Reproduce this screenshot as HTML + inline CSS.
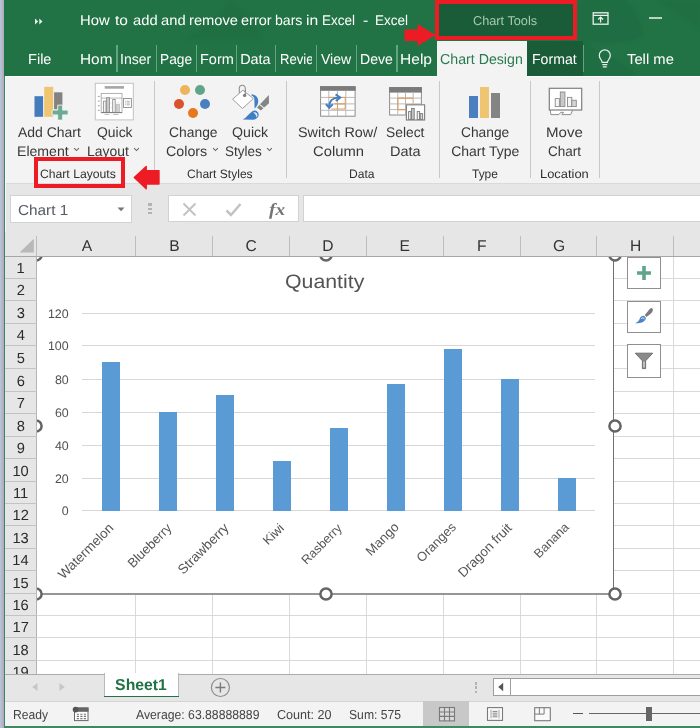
<!DOCTYPE html>
<html lang="en">
<head>
<meta charset="utf-8">
<title>How to add and remove error bars in Excel - Excel</title>
<style>
html,body{margin:0;padding:0;background:#fff;}
body{width:700px;height:728px;overflow:hidden;}
#app{position:relative;width:700px;height:728px;overflow:hidden;font-family:"Liberation Sans",sans-serif;will-change:transform;}
.t{position:absolute;white-space:nowrap;display:block;transform-origin:0 0;text-rendering:geometricPrecision;}
</style>
</head>
<body>
<div id="app">
<div style="position:absolute;left:0.00px;top:0.00px;width:700.00px;height:728.00px;background:#ffffff;"></div>
<div style="position:absolute;left:0.00px;top:0.00px;width:700.00px;height:76.30px;background:#217346;"></div>
<div style="position:absolute;left:0.00px;top:76.30px;width:700.00px;height:106.40px;background:#f3f3f3;"></div>
<div style="position:absolute;left:0.00px;top:182.70px;width:700.00px;height:74.00px;background:#e6e6e6;"></div>
<div style="position:absolute;left:0.00px;top:182.70px;width:700.00px;height:1.00px;background:#dadada;"></div>
<svg style="position:absolute;left:0;top:0;filter:blur(2.2px)" width="700" height="76" viewBox="0 0 700 76"><path d="M578 0 H626 C636 10 643 24 643 35 C636 41 622 43 606 43 H584 C600 52 620 60 640 76 H560 V40 H578 Z" fill="#000" fill-opacity="0.05"/><path d="M655 0 H700 V30 C690 22 672 12 655 0 Z" fill="#000" fill-opacity="0.03"/><path d="M230 0 C250 14 262 26 262 40 H180 C200 30 220 16 230 0 Z" fill="#000" fill-opacity="0.03"/></svg>
<svg style="position:absolute;left:34px;top:17px" width="10" height="9" viewBox="0 0 10 9"><path d="M1 1.5 L4.2 4.5 L1 7.5 Z M5.3 1.5 L8.5 4.5 L5.3 7.5 Z" fill="#e8f1ec"/></svg>
<span class="t" id="t1" style="left:80.29px;top:13.00px;font-size:14.1px;line-height:14.1px;color:#ffffff;transform:scaleX(1.0519);">How</span>
<span class="t" id="t2" style="left:115.33px;top:13.00px;font-size:14.1px;line-height:14.1px;color:#ffffff;transform:scaleX(1.1000);">to</span>
<span class="t" id="t3" style="left:132.58px;top:13.00px;font-size:14.1px;line-height:14.1px;color:#ffffff;transform:scaleX(1.0455);">add</span>
<span class="t" id="t4" style="left:160.98px;top:13.00px;font-size:14.1px;line-height:14.1px;color:#ffffff;transform:scaleX(1.0455);">and</span>
<span class="t" id="t5" style="left:189.06px;top:13.00px;font-size:14.1px;line-height:14.1px;color:#ffffff;transform:scaleX(1.0418);">remove</span>
<span class="t" id="t6" style="left:240.78px;top:13.00px;font-size:14.1px;line-height:14.1px;color:#ffffff;transform:scaleX(1.0310);">error</span>
<span class="t" id="t7" style="left:275.00px;top:13.00px;font-size:14.1px;line-height:14.1px;color:#ffffff;">bars</span>
<span class="t" id="t8" style="left:306.09px;top:13.00px;font-size:14.1px;line-height:14.1px;color:#ffffff;transform:scaleX(1.1111);">in</span>
<span class="t" id="t9" style="left:321.70px;top:13.00px;font-size:14.1px;line-height:14.1px;color:#ffffff;transform:scaleX(0.9581);">Excel</span>
<span class="t" id="t10" style="left:363.39px;top:13.00px;font-size:14.1px;line-height:14.1px;color:#ffffff;transform:scaleX(1.1400);">-</span>
<span class="t" id="t11" style="left:374.90px;top:13.00px;font-size:14.1px;line-height:14.1px;color:#ffffff;transform:scaleX(0.9581);">Excel</span>
<div style="position:absolute;left:434.90px;top:-0.50px;width:141.90px;height:40.40px;background:#1a5c38;box-sizing:border-box;border:4.6px solid #ed1c24;"></div>
<span class="t" id="t12" style="left:472.95px;top:15.00px;font-size:12.8px;line-height:12.8px;color:#a7c8b5;transform:scaleX(0.9945);">Chart Tools</span>
<svg style="position:absolute;left:403px;top:22px" width="34" height="26" viewBox="0 0 34 26"><path d="M1.5 7.5 L14.5 7.5 L14.5 2 L32.5 13 L14.5 24 L14.5 19 L1.5 19 Z" fill="#ed1c24"/></svg>
<svg style="position:absolute;left:591.6px;top:11.4px" width="18" height="15" viewBox="0 0 18 15"><rect x="1.2" y="1.8" width="14.8" height="11.4" fill="none" stroke="#e8f1ec" stroke-width="1.3"/><path d="M1.2 4.4 H16" stroke="#e8f1ec" stroke-width="1.2"/><path d="M8.6 6.2 L8.6 11.6 M6.1 8.5 L8.6 6.1 L11.1 8.5" fill="none" stroke="#e8f1ec" stroke-width="1.3"/></svg>
<div style="position:absolute;left:649.00px;top:17.00px;width:13.00px;height:2.00px;background:#b9d3c5;"></div>
<span class="t" id="t13" style="left:28.24px;top:53.00px;font-size:14.4px;line-height:14.4px;color:#ffffff;transform:scaleX(1.0118);">File</span>
<span class="t" id="t14" style="left:79.86px;top:53.00px;font-size:14.4px;line-height:14.4px;color:#ffffff;transform:scaleX(1.0690);">Hom</span>
<span class="t" id="t15" style="left:120.48px;top:53.00px;font-size:14.4px;line-height:14.4px;color:#ffffff;transform:scaleX(0.9738);">Inser</span>
<span class="t" id="t16" style="left:159.80px;top:53.00px;font-size:14.4px;line-height:14.4px;color:#ffffff;transform:scaleX(0.9575);">Page</span>
<span class="t" id="t17" style="left:200.14px;top:53.00px;font-size:14.4px;line-height:14.4px;color:#ffffff;transform:scaleX(1.0080);">Form</span>
<span class="t" id="t18" style="left:240.15px;top:53.00px;font-size:14.4px;line-height:14.4px;color:#ffffff;">Data</span>
<span class="t" id="t19" style="left:279.76px;top:53.00px;font-size:14.4px;line-height:14.4px;color:#ffffff;transform:scaleX(0.9114);">Revie</span>
<span class="t" id="t20" style="left:321.16px;top:53.00px;font-size:14.4px;line-height:14.4px;color:#ffffff;transform:scaleX(0.9756);">View</span>
<span class="t" id="t21" style="left:359.68px;top:53.00px;font-size:14.4px;line-height:14.4px;color:#ffffff;transform:scaleX(0.9795);">Deve</span>
<span class="t" id="t22" style="left:399.55px;top:53.00px;font-size:14.4px;line-height:14.4px;color:#ffffff;transform:scaleX(1.0811);">Help</span>
<div style="position:absolute;left:311.60px;top:46.00px;width:4.20px;height:26.00px;background:#217346;"></div>
<div style="position:absolute;left:116.40px;top:45.20px;width:1.20px;height:26.60px;background:#63a583;"></div>
<div style="position:absolute;left:156.00px;top:45.20px;width:1.20px;height:26.60px;background:#63a583;"></div>
<div style="position:absolute;left:196.00px;top:45.20px;width:1.20px;height:26.60px;background:#63a583;"></div>
<div style="position:absolute;left:236.00px;top:45.20px;width:1.20px;height:26.60px;background:#63a583;"></div>
<div style="position:absolute;left:275.30px;top:45.20px;width:1.20px;height:26.60px;background:#63a583;"></div>
<div style="position:absolute;left:316.00px;top:45.20px;width:1.20px;height:26.60px;background:#63a583;"></div>
<div style="position:absolute;left:355.80px;top:45.20px;width:1.20px;height:26.60px;background:#63a583;"></div>
<div style="position:absolute;left:396.40px;top:45.20px;width:1.20px;height:26.60px;background:#63a583;"></div>
<div style="position:absolute;left:582.80px;top:45.20px;width:1.20px;height:26.60px;background:#63a583;"></div>
<div style="position:absolute;left:436.60px;top:40.60px;width:90.60px;height:36.00px;background:#f3f3f3;"></div>
<span class="t" id="t23" style="left:440.46px;top:53.00px;font-size:14.4px;line-height:14.4px;color:#2a7a50;transform:scaleX(0.9860);">Chart Design</span>
<div style="position:absolute;left:527.20px;top:41.00px;width:55.80px;height:35.30px;background:#1a5c38;"></div>
<span class="t" id="t24" style="left:532.37px;top:53.00px;font-size:14.4px;line-height:14.4px;color:#ffffff;transform:scaleX(0.9808);">Format</span>
<svg style="position:absolute;left:595.6px;top:47.8px" width="17.6" height="21.8" viewBox="0 0 18 23"><path d="M6.2 15.2 C6.2 12.6 3.2 11.4 3.2 7.8 A5.8 5.8 0 0 1 14.8 7.8 C14.8 11.4 11.8 12.6 11.8 15.2 Z" fill="none" stroke="#e8f1ec" stroke-width="1.3"/><path d="M6.4 17.6 H11.6 M6.9 20 H11.1" stroke="#e8f1ec" stroke-width="1.3"/></svg>
<span class="t" id="t25" style="left:627.24px;top:53.00px;font-size:14.4px;line-height:14.4px;color:#ffffff;transform:scaleX(1.0279);">Tell me</span>
<div style="position:absolute;left:154.40px;top:81.00px;width:1.00px;height:96.50px;background:#c9c9c9;"></div>
<div style="position:absolute;left:286.30px;top:81.00px;width:1.00px;height:96.50px;background:#c9c9c9;"></div>
<div style="position:absolute;left:438.50px;top:81.00px;width:1.00px;height:96.50px;background:#c9c9c9;"></div>
<div style="position:absolute;left:529.80px;top:81.00px;width:1.00px;height:96.50px;background:#c9c9c9;"></div>
<div style="position:absolute;left:599.20px;top:81.00px;width:1.00px;height:96.50px;background:#c9c9c9;"></div>
<span class="t" id="t26" style="left:18.30px;top:125.00px;font-size:14.0px;line-height:14.0px;color:#383838;transform:scaleX(0.9968);">Add Chart</span>
<span class="t" id="t27" style="left:16.54px;top:144.00px;font-size:14.0px;line-height:14.0px;color:#383838;transform:scaleX(1.0060);">Element</span>
<span class="t" id="t28" style="left:97.05px;top:125.00px;font-size:14.0px;line-height:14.0px;color:#383838;transform:scaleX(0.9943);">Quick</span>
<span class="t" id="t29" style="left:86.76px;top:144.00px;font-size:14.0px;line-height:14.0px;color:#383838;transform:scaleX(0.9939);">Layout</span>
<span class="t" id="t30" style="left:168.56px;top:125.00px;font-size:14.0px;line-height:14.0px;color:#383838;transform:scaleX(0.9906);">Change</span>
<span class="t" id="t31" style="left:165.54px;top:144.00px;font-size:14.0px;line-height:14.0px;color:#383838;transform:scaleX(1.0191);">Colors</span>
<span class="t" id="t32" style="left:231.84px;top:125.00px;font-size:14.0px;line-height:14.0px;color:#383838;transform:scaleX(1.0114);">Quick</span>
<span class="t" id="t33" style="left:224.98px;top:144.00px;font-size:14.0px;line-height:14.0px;color:#383838;transform:scaleX(0.9633);">Styles</span>
<span class="t" id="t34" style="left:297.93px;top:125.00px;font-size:14.0px;line-height:14.0px;color:#383838;transform:scaleX(1.0282);">Switch Row/</span>
<span class="t" id="t35" style="left:312.81px;top:144.00px;font-size:14.0px;line-height:14.0px;color:#383838;transform:scaleX(1.0559);">Column</span>
<span class="t" id="t36" style="left:386.26px;top:125.00px;font-size:14.0px;line-height:14.0px;color:#383838;transform:scaleX(0.9868);">Select</span>
<span class="t" id="t37" style="left:389.61px;top:144.00px;font-size:14.0px;line-height:14.0px;color:#383838;transform:scaleX(1.0336);">Data</span>
<span class="t" id="t38" style="left:460.66px;top:125.00px;font-size:14.0px;line-height:14.0px;color:#383838;transform:scaleX(0.9843);">Change</span>
<span class="t" id="t39" style="left:451.15px;top:144.00px;font-size:14.0px;line-height:14.0px;color:#383838;">Chart Type</span>
<span class="t" id="t40" style="left:546.46px;top:125.00px;font-size:14.0px;line-height:14.0px;color:#383838;transform:scaleX(1.0760);">Move</span>
<span class="t" id="t41" style="left:548.07px;top:144.00px;font-size:14.0px;line-height:14.0px;color:#383838;transform:scaleX(0.9672);">Chart</span>
<svg style="position:absolute;left:72.7px;top:147.3px" width="7" height="5" viewBox="0 0 7 5"><path d="M1.1 1.2 L3.5 3.6 L5.9 1.2" fill="none" stroke="#666" stroke-width="1.05"/></svg>
<svg style="position:absolute;left:133.4px;top:147.3px" width="7" height="5" viewBox="0 0 7 5"><path d="M1.1 1.2 L3.5 3.6 L5.9 1.2" fill="none" stroke="#666" stroke-width="1.05"/></svg>
<svg style="position:absolute;left:211.7px;top:147.3px" width="7" height="5" viewBox="0 0 7 5"><path d="M1.1 1.2 L3.5 3.6 L5.9 1.2" fill="none" stroke="#666" stroke-width="1.05"/></svg>
<svg style="position:absolute;left:266.3px;top:147.3px" width="7" height="5" viewBox="0 0 7 5"><path d="M1.1 1.2 L3.5 3.6 L5.9 1.2" fill="none" stroke="#666" stroke-width="1.05"/></svg>
<span class="t" id="t42" style="left:39.95px;top:168.00px;font-size:12.2px;line-height:12.2px;color:#303030;">Chart Layouts</span>
<span class="t" id="t43" style="left:187.26px;top:168.00px;font-size:12.2px;line-height:12.2px;color:#303030;transform:scaleX(0.9885);">Chart Styles</span>
<span class="t" id="t44" style="left:349.41px;top:168.00px;font-size:12.2px;line-height:12.2px;color:#303030;transform:scaleX(0.9899);">Data</span>
<span class="t" id="t45" style="left:472.15px;top:168.00px;font-size:12.2px;line-height:12.2px;color:#303030;transform:scaleX(0.9804);">Type</span>
<span class="t" id="t46" style="left:539.54px;top:168.00px;font-size:12.2px;line-height:12.2px;color:#303030;transform:scaleX(1.0576);">Location</span>
<div style="position:absolute;left:33.70px;top:156.90px;width:91.10px;height:31.50px;background:transparent;box-sizing:border-box;border:4.6px solid #ed1c24;"></div>
<svg style="position:absolute;left:132px;top:163px" width="30" height="28" viewBox="0 0 30 28"><path d="M27 7.6 L14.2 7.6 L14.2 3.4 L2.3 14.6 L14.2 25.8 L14.2 21 L27 21 Z" fill="#ed1c24" stroke="#ed1c24" stroke-width="1.4" stroke-linejoin="round"/></svg>
<svg style="position:absolute;left:33px;top:85px" width="37" height="36" viewBox="0 0 37 36"><rect x="1.5" y="11.2" width="8.6" height="20.6" fill="#437bbb"/><rect x="11.2" y="1.8" width="9" height="30" fill="#f0c571"/><rect x="21.1" y="7.3" width="8.3" height="17" fill="#828282"/><path d="M24.7 20.1 h4.9 v5 h5.5 v4.8 h-5.5 v5.2 h-4.9 v-5.2 h-5.6 v-4.8 h5.6 z" fill="#6aab94" stroke="#f3f3f3" stroke-width="0.9"/></svg>
<svg style="position:absolute;left:94px;top:82px" width="41" height="39" viewBox="0 0 41 39"><rect x="1.3" y="1.3" width="38" height="36.6" fill="#fff" stroke="#c2c2c2" stroke-width="1"/><rect x="10.7" y="4.1" width="19.3" height="2.6" fill="#a6a6a6"/><rect x="7.2" y="11.4" width="20.8" height="19.2" fill="#fff" stroke="#a9a9a9" stroke-width="0.9"/><path d="M7.2 16.1h20.8" stroke="#a9a9a9" stroke-width="0.8"/><path d="M7.6 21h20M7.6 25.6h20" stroke="#dedede" stroke-width="0.6"/><path d="M3.9 14.4h1.8M3.9 19.1h1.8M3.9 23.8h1.8M3.9 28.4h1.8" stroke="#8f8f8f" stroke-width="0.9"/><rect x="9.6" y="19.1" width="2.4" height="11.2" fill="#f4f4f4" stroke="#8a8a8a" stroke-width="0.8"/><rect x="12.6" y="15.7" width="3" height="14.6" fill="#c9c9c9" stroke="#8a8a8a" stroke-width="0.8"/><rect x="18.7" y="17.5" width="2.5" height="12.8" fill="#f4f4f4" stroke="#8a8a8a" stroke-width="0.8"/><rect x="22" y="22.6" width="3.5" height="7.7" fill="#cfcfcf" stroke="#b0b0b0" stroke-width="0.6"/><path d="M7.2 30.6h20.8" stroke="#7d7d7d" stroke-width="1"/><rect x="29.5" y="16.5" width="7.9" height="9" fill="#fff" stroke="#8d8d8d" stroke-width="0.9"/><path d="M31 19.2h0.8M32.6 19.2h3.2M31 21h0.8M32.6 21h3.2M31 22.8h0.8M32.6 22.8h3.2" stroke="#999" stroke-width="0.8"/><path d="M10.5 32.5h4.7M19.1 32.5h5.5" stroke="#b0b0b0" stroke-width="0.8"/></svg>
<div style="position:absolute;left:180.30px;top:85.20px;width:10.00px;height:10.00px;background:#ecb55c;border-radius:50%;"></div>
<div style="position:absolute;left:194.90px;top:85.20px;width:10.00px;height:10.00px;background:#5fa58a;border-radius:50%;"></div>
<div style="position:absolute;left:174.30px;top:98.60px;width:10.00px;height:10.00px;background:#d9532c;border-radius:50%;"></div>
<div style="position:absolute;left:200.20px;top:98.60px;width:10.00px;height:10.00px;background:#4a7fc0;border-radius:50%;"></div>
<div style="position:absolute;left:187.60px;top:107.80px;width:10.00px;height:10.00px;background:#e8781d;border-radius:50%;"></div>
<svg style="position:absolute;left:231px;top:84px" width="40" height="37" viewBox="0 0 40 37"><path d="M20.8 10.2 C25.2 10.8 27.6 14 27.2 18 C26.9 21 25.4 23 23.6 24.4 L23.3 14.8 C23 13.2 22 12.2 20.4 11.6 Z" fill="#3f7fc4"/><path d="M8.3 9 V4.3 a3 3 0 0 1 6 0 V11" fill="none" stroke="#8f8f8f" stroke-width="1.1"/><path d="M1.6 15.2 L11.9 6.2 L22.3 14.6 L11.5 24.5 Z" fill="#ffffff" stroke="#9c9c9c" stroke-width="1" stroke-linejoin="round"/><path d="M14.3 6 V11" fill="none" stroke="#8f8f8f" stroke-width="1.1"/><circle cx="13.6" cy="11.4" r="1.7" fill="#7f7f7f"/><path d="M37.8 11 L38 19.2 L29.8 26.6 L26 23.6 Z" fill="#858585"/><path d="M28.7 20.6 L33.6 24.4" stroke="#f3f3f3" stroke-width="1.1"/><path d="M11.7 35.6 C16 33.2 18 29.4 21.4 27.2 C24 25.6 27 27 27.6 30 C28.2 33 25.4 35.6 22 35.7 Z" fill="#3f7fc4"/><path d="M22.3 28.6 C24.4 27.8 26.2 29 26.4 31 C26.5 32 26.2 32.8 25.6 33.4 C25.2 31.4 24 29.6 22.3 28.6 Z" fill="#e6f1fb"/></svg>
<svg style="position:absolute;left:319px;top:85px" width="38" height="33" viewBox="0 0 38 33"><rect x="1.6" y="1.7" width="34.5" height="29.5" fill="#fff" stroke="#8c8c8c" stroke-width="1"/><rect x="1.1" y="1.2" width="35.5" height="4.6" fill="#7b7b7b"/><path d="M1.6 12.4h34.5M1.6 18.9h34.5M1.6 25.3h34.5M9.8 5.8v25.4M18.5 5.8v25.4M26.8 5.8v25.4" stroke="#b9b9b9" stroke-width="1"/><path d="M9.8 12.4h16.4v11.6h-14" fill="none" stroke="#dc9c62" stroke-width="1"/><path d="M18.5 18.4v5.6M15.3 18.9h10.9" fill="none" stroke="#dc9c62" stroke-width="1.1"/><path d="M10.2 21.4 C10.2 16 14 12.6 20 12.5" fill="none" stroke="#437fc0" stroke-width="2"/><path d="M16.6 9.4 L21.2 12.5 L16.9 16.1" fill="none" stroke="#437fc0" stroke-width="2"/><path d="M7 19 L10.2 22.8 L13.8 19.3" fill="none" stroke="#437fc0" stroke-width="2"/></svg>
<svg style="position:absolute;left:388px;top:86px" width="38" height="36" viewBox="0 0 38 36"><rect x="1.6" y="1.6" width="31.8" height="27.4" fill="#fff" stroke="#8c8c8c" stroke-width="1"/><rect x="1.1" y="1.1" width="32.8" height="5.5" fill="#7b7b7b"/><path d="M1.6 12.1h31.8M1.6 17.9h31.8M1.6 23.6h31.8M9.8 6.6v22.4M17.5 6.6v22.4M25.2 6.6v22.4" stroke="#b9b9b9" stroke-width="1"/><path d="M9.8 12.1h15.4M9.8 12.1v11.5M9.8 23.6h8" fill="none" stroke="#dc9c62" stroke-width="1.1"/><path d="M25.2 12.1v5.8" fill="none" stroke="#e9c19c" stroke-width="1.1"/><rect x="18.4" y="18.8" width="18.2" height="15.2" fill="#fff" stroke="#858585" stroke-width="1.2"/><rect x="20.6" y="25.6" width="2.3" height="7.8" fill="#f2f2f2" stroke="#777" stroke-width="0.9"/><rect x="23.6" y="22.4" width="2.6" height="11" fill="#c9c9c9" stroke="#777" stroke-width="0.9"/><rect x="29.2" y="25.6" width="2.4" height="7.8" fill="#f2f2f2" stroke="#777" stroke-width="0.9"/><rect x="32.2" y="27.6" width="2.5" height="5.8" fill="#d4d4d4" stroke="#777" stroke-width="0.9"/></svg>
<div style="position:absolute;left:469.30px;top:95.70px;width:9.00px;height:21.90px;background:#4a7fc0;"></div>
<div style="position:absolute;left:480.10px;top:86.70px;width:9.00px;height:30.90px;background:#f0c571;"></div>
<div style="position:absolute;left:491.00px;top:93.10px;width:8.50px;height:24.50px;background:#848484;"></div>
<svg style="position:absolute;left:547px;top:86px" width="37" height="32" viewBox="0 0 37 32"><path d="M3.2 24 L3.9 28.6 H11.9 L13.7 26.3 H16.6 L14.9 28.6 H23.7 L25.6 24" fill="#fff" stroke="#8f8f8f" stroke-width="1"/><rect x="2.3" y="2.3" width="32.4" height="21.7" fill="#fff" stroke="#7f7f7f" stroke-width="1.2"/><rect x="8.2" y="12.6" width="4.2" height="8" fill="#f4f4f4" stroke="#8a8a8a" stroke-width="0.9"/><rect x="13.3" y="6" width="4.6" height="14.6" fill="#c9c9c9" stroke="#8a8a8a" stroke-width="0.9"/><rect x="20.5" y="11.4" width="4.3" height="9.2" fill="#f4f4f4" stroke="#8a8a8a" stroke-width="0.9"/><rect x="24.8" y="14.2" width="4.5" height="6.4" fill="#d4d4d4" stroke="#8a8a8a" stroke-width="0.9"/></svg>
<div style="position:absolute;left:10.30px;top:195.40px;width:121.80px;height:27.30px;background:#ffffff;box-sizing:border-box;border:1px solid #d2d2d2;"></div>
<span class="t" id="t47" style="left:17.51px;top:204.00px;font-size:14.5px;line-height:14.5px;color:#555a63;transform:scaleX(1.0565);">Chart 1</span>
<svg style="position:absolute;left:116.5px;top:207px" width="8" height="5" viewBox="0 0 8 5"><path d="M0.5 0.5 H7.5 L4 4.3 Z" fill="#777"/></svg>
<div style="position:absolute;left:148.30px;top:203.30px;width:3.40px;height:2.40px;background:#b3b3b3;"></div>
<div style="position:absolute;left:148.30px;top:207.70px;width:3.40px;height:2.40px;background:#b3b3b3;"></div>
<div style="position:absolute;left:148.30px;top:212.10px;width:3.40px;height:2.40px;background:#b3b3b3;"></div>
<div style="position:absolute;left:168.30px;top:195.40px;width:131.20px;height:27.10px;background:#ffffff;box-sizing:border-box;border:1px solid #d2d2d2;"></div>
<div style="position:absolute;left:302.50px;top:195.40px;width:400.00px;height:27.10px;background:#ffffff;box-sizing:border-box;border:1px solid #d2d2d2;"></div>
<svg style="position:absolute;left:182px;top:202px" width="15" height="15" viewBox="0 0 15 15"><path d="M1.5 1.5 L13.5 13.5 M13.5 1.5 L1.5 13.5" stroke="#c2c2c2" stroke-width="1.9" fill="none"/></svg>
<svg style="position:absolute;left:225px;top:202px" width="17" height="15" viewBox="0 0 17 15"><path d="M1.5 8.5 L6 13 L15.5 2" stroke="#c2c2c2" stroke-width="2.5" fill="none"/></svg>
<span class="t" id="t48" style="left:268.70px;top:201.00px;font-size:17px;line-height:17px;color:#757575;font-weight:700;transform:scaleX(1.1400);font-family:'Liberation Serif', serif;font-style:italic;">fx</span>
<div style="position:absolute;left:37.00px;top:277.80px;width:663.00px;height:1.00px;background:#d9d9d9;"></div>
<div style="position:absolute;left:37.00px;top:300.00px;width:663.00px;height:1.00px;background:#d9d9d9;"></div>
<div style="position:absolute;left:37.00px;top:322.60px;width:663.00px;height:1.00px;background:#d9d9d9;"></div>
<div style="position:absolute;left:37.00px;top:344.70px;width:663.00px;height:1.00px;background:#d9d9d9;"></div>
<div style="position:absolute;left:37.00px;top:367.90px;width:663.00px;height:1.00px;background:#d9d9d9;"></div>
<div style="position:absolute;left:37.00px;top:390.50px;width:663.00px;height:1.00px;background:#d9d9d9;"></div>
<div style="position:absolute;left:37.00px;top:412.90px;width:663.00px;height:1.00px;background:#d9d9d9;"></div>
<div style="position:absolute;left:37.00px;top:435.70px;width:663.00px;height:1.00px;background:#d9d9d9;"></div>
<div style="position:absolute;left:37.00px;top:458.10px;width:663.00px;height:1.00px;background:#d9d9d9;"></div>
<div style="position:absolute;left:37.00px;top:480.70px;width:663.00px;height:1.00px;background:#d9d9d9;"></div>
<div style="position:absolute;left:37.00px;top:503.00px;width:663.00px;height:1.00px;background:#d9d9d9;"></div>
<div style="position:absolute;left:37.00px;top:525.20px;width:663.00px;height:1.00px;background:#d9d9d9;"></div>
<div style="position:absolute;left:37.00px;top:547.70px;width:663.00px;height:1.00px;background:#d9d9d9;"></div>
<div style="position:absolute;left:37.00px;top:570.30px;width:663.00px;height:1.00px;background:#d9d9d9;"></div>
<div style="position:absolute;left:37.00px;top:592.60px;width:663.00px;height:1.00px;background:#d9d9d9;"></div>
<div style="position:absolute;left:37.00px;top:615.10px;width:663.00px;height:1.00px;background:#d9d9d9;"></div>
<div style="position:absolute;left:37.00px;top:637.00px;width:663.00px;height:1.00px;background:#d9d9d9;"></div>
<div style="position:absolute;left:37.00px;top:659.60px;width:663.00px;height:1.00px;background:#d9d9d9;"></div>
<div style="position:absolute;left:37.00px;top:682.00px;width:663.00px;height:1.00px;background:#d9d9d9;"></div>
<div style="position:absolute;left:135.20px;top:256.20px;width:1.00px;height:420.00px;background:#d9d9d9;"></div>
<div style="position:absolute;left:212.00px;top:256.20px;width:1.00px;height:420.00px;background:#d9d9d9;"></div>
<div style="position:absolute;left:289.10px;top:256.20px;width:1.00px;height:420.00px;background:#d9d9d9;"></div>
<div style="position:absolute;left:366.10px;top:256.20px;width:1.00px;height:420.00px;background:#d9d9d9;"></div>
<div style="position:absolute;left:443.00px;top:256.20px;width:1.00px;height:420.00px;background:#d9d9d9;"></div>
<div style="position:absolute;left:519.90px;top:256.20px;width:1.00px;height:420.00px;background:#d9d9d9;"></div>
<div style="position:absolute;left:596.40px;top:256.20px;width:1.00px;height:420.00px;background:#d9d9d9;"></div>
<div style="position:absolute;left:673.30px;top:256.20px;width:1.00px;height:420.00px;background:#d9d9d9;"></div>
<div style="position:absolute;left:37.00px;top:256.70px;width:577.00px;height:338.30px;background:#ffffff;"></div>
<div style="position:absolute;left:613.00px;top:256.70px;width:1.00px;height:338.30px;background:#707070;"></div>
<div style="position:absolute;left:37.00px;top:593.00px;width:577.00px;height:2.00px;background:#969696;"></div>
<span class="t" id="t49" style="left:284.71px;top:273.00px;font-size:19.5px;line-height:19.5px;color:#545454;transform:scaleX(1.0923);">Quantity</span>
<div style="position:absolute;left:81.80px;top:510.00px;width:513.20px;height:1.00px;background:#d7d7d7;"></div>
<span class="t" id="t50" style="left:61.70px;top:505.00px;font-size:12.4px;line-height:12.4px;color:#505050;">0</span>
<div style="position:absolute;left:81.80px;top:478.00px;width:513.20px;height:1.00px;background:#d7d7d7;"></div>
<span class="t" id="t51" style="left:54.95px;top:473.00px;font-size:12.4px;line-height:12.4px;color:#505050;">20</span>
<div style="position:absolute;left:81.80px;top:445.00px;width:513.20px;height:1.00px;background:#d7d7d7;"></div>
<span class="t" id="t52" style="left:54.95px;top:440.00px;font-size:12.4px;line-height:12.4px;color:#505050;">40</span>
<div style="position:absolute;left:81.80px;top:412.00px;width:513.20px;height:1.00px;background:#d7d7d7;"></div>
<span class="t" id="t53" style="left:54.95px;top:407.00px;font-size:12.4px;line-height:12.4px;color:#505050;">60</span>
<div style="position:absolute;left:81.80px;top:379.00px;width:513.20px;height:1.00px;background:#d7d7d7;"></div>
<span class="t" id="t54" style="left:54.95px;top:374.00px;font-size:12.4px;line-height:12.4px;color:#505050;">80</span>
<div style="position:absolute;left:81.80px;top:345.00px;width:513.20px;height:1.00px;background:#d7d7d7;"></div>
<span class="t" id="t55" style="left:47.95px;top:340.00px;font-size:12.4px;line-height:12.4px;color:#505050;">100</span>
<div style="position:absolute;left:81.80px;top:313.00px;width:513.20px;height:1.00px;background:#d7d7d7;"></div>
<span class="t" id="t56" style="left:47.95px;top:308.00px;font-size:12.4px;line-height:12.4px;color:#505050;">120</span>
<div style="position:absolute;left:102.10px;top:362.30px;width:18.00px;height:148.50px;background:#5b9bd5;"></div>
<div style="position:absolute;left:159.10px;top:411.80px;width:18.00px;height:99.00px;background:#5b9bd5;"></div>
<div style="position:absolute;left:216.10px;top:395.30px;width:18.00px;height:115.50px;background:#5b9bd5;"></div>
<div style="position:absolute;left:273.10px;top:461.30px;width:18.00px;height:49.50px;background:#5b9bd5;"></div>
<div style="position:absolute;left:330.10px;top:428.30px;width:18.00px;height:82.50px;background:#5b9bd5;"></div>
<div style="position:absolute;left:387.10px;top:383.75px;width:18.00px;height:127.05px;background:#5b9bd5;"></div>
<div style="position:absolute;left:444.10px;top:349.10px;width:18.00px;height:161.70px;background:#5b9bd5;"></div>
<div style="position:absolute;left:501.10px;top:378.80px;width:18.00px;height:132.00px;background:#5b9bd5;"></div>
<div style="position:absolute;left:558.10px;top:477.80px;width:18.00px;height:33.00px;background:#5b9bd5;"></div>
<span class="t r" id="lab0" style="right:583.07px;top:516.85px;font-size:13px;line-height:14px;color:#555555;transform-origin:100% 100%;transform:rotate(-45deg) scale(1.0346);">Watermelon</span>
<span class="t r" id="lab1" style="right:525.57px;top:517.23px;font-size:13px;line-height:14px;color:#555555;transform-origin:100% 100%;transform:rotate(-45deg) scale(1.0070);">Blueberry</span>
<span class="t r" id="lab2" style="right:468.29px;top:517.10px;font-size:13px;line-height:14px;color:#555555;transform-origin:100% 100%;transform:rotate(-45deg) scale(1.0413);">Strawberry</span>
<span class="t r" id="lab3" style="right:413.50px;top:517.39px;font-size:13px;line-height:14px;color:#555555;transform-origin:100% 100%;transform:rotate(-45deg) scale(0.9893);">Kiwi</span>
<span class="t r" id="lab4" style="right:355.19px;top:517.23px;font-size:13px;line-height:14px;color:#555555;transform-origin:100% 100%;transform:rotate(-45deg) scale(0.9688);">Rasberry</span>
<span class="t r" id="lab5" style="right:298.06px;top:516.47px;font-size:13px;line-height:14px;color:#555555;transform-origin:100% 100%;transform:rotate(-45deg) scale(1.0158);">Mango</span>
<span class="t r" id="lab6" style="right:240.92px;top:516.37px;font-size:13px;line-height:14px;color:#555555;transform-origin:100% 100%;transform:rotate(-45deg) scale(0.9920);">Oranges</span>
<span class="t r" id="lab7" style="right:185.50px;top:517.06px;font-size:13px;line-height:14px;color:#555555;transform-origin:100% 100%;transform:rotate(-45deg) scale(1.0261);">Dragon fruit</span>
<span class="t r" id="lab8" style="right:128.15px;top:515.88px;font-size:13px;line-height:14px;color:#555555;transform-origin:100% 100%;transform:rotate(-45deg) scale(0.9708);">Banana</span>
<svg style="position:absolute;left:28.40px;top:247.30px" width="16" height="16" viewBox="0 0 16 16"><circle cx="8" cy="8" r="5.6" fill="#ffffff" stroke="#646464" stroke-width="2.5"/></svg>
<svg style="position:absolute;left:28.40px;top:417.50px" width="16" height="16" viewBox="0 0 16 16"><circle cx="8" cy="8" r="5.6" fill="#ffffff" stroke="#646464" stroke-width="2.5"/></svg>
<svg style="position:absolute;left:28.40px;top:586.40px" width="16" height="16" viewBox="0 0 16 16"><circle cx="8" cy="8" r="5.6" fill="#ffffff" stroke="#646464" stroke-width="2.5"/></svg>
<svg style="position:absolute;left:317.60px;top:247.30px" width="16" height="16" viewBox="0 0 16 16"><circle cx="8" cy="8" r="5.6" fill="#ffffff" stroke="#646464" stroke-width="2.5"/></svg>
<svg style="position:absolute;left:317.60px;top:586.40px" width="16" height="16" viewBox="0 0 16 16"><circle cx="8" cy="8" r="5.6" fill="#ffffff" stroke="#646464" stroke-width="2.5"/></svg>
<svg style="position:absolute;left:606.60px;top:247.30px" width="16" height="16" viewBox="0 0 16 16"><circle cx="8" cy="8" r="5.6" fill="#ffffff" stroke="#646464" stroke-width="2.5"/></svg>
<svg style="position:absolute;left:606.60px;top:417.50px" width="16" height="16" viewBox="0 0 16 16"><circle cx="8" cy="8" r="5.6" fill="#ffffff" stroke="#646464" stroke-width="2.5"/></svg>
<svg style="position:absolute;left:606.60px;top:586.40px" width="16" height="16" viewBox="0 0 16 16"><circle cx="8" cy="8" r="5.6" fill="#ffffff" stroke="#646464" stroke-width="2.5"/></svg>
<div style="position:absolute;left:4.00px;top:232.00px;width:696.00px;height:23.60px;background:#e6e6e6;"></div>
<div style="position:absolute;left:36.10px;top:236.00px;width:1.00px;height:20.20px;background:#bdbdbd;"></div>
<div style="position:absolute;left:135.20px;top:236.00px;width:1.00px;height:20.20px;background:#bdbdbd;"></div>
<div style="position:absolute;left:212.00px;top:236.00px;width:1.00px;height:20.20px;background:#bdbdbd;"></div>
<div style="position:absolute;left:289.10px;top:236.00px;width:1.00px;height:20.20px;background:#bdbdbd;"></div>
<div style="position:absolute;left:366.10px;top:236.00px;width:1.00px;height:20.20px;background:#bdbdbd;"></div>
<div style="position:absolute;left:443.00px;top:236.00px;width:1.00px;height:20.20px;background:#bdbdbd;"></div>
<div style="position:absolute;left:519.90px;top:236.00px;width:1.00px;height:20.20px;background:#bdbdbd;"></div>
<div style="position:absolute;left:596.40px;top:236.00px;width:1.00px;height:20.20px;background:#bdbdbd;"></div>
<div style="position:absolute;left:673.30px;top:236.00px;width:1.00px;height:20.20px;background:#bdbdbd;"></div>
<div style="position:absolute;left:4.00px;top:255.60px;width:696.00px;height:1.20px;background:#a6a6a6;"></div>
<span class="t" id="t57" style="left:81.78px;top:239.00px;font-size:15.6px;line-height:15.6px;color:#333333;">A</span>
<span class="t" id="t58" style="left:169.32px;top:239.00px;font-size:15.6px;line-height:15.6px;color:#333333;">B</span>
<span class="t" id="t59" style="left:245.47px;top:239.00px;font-size:15.6px;line-height:15.6px;color:#333333;">C</span>
<span class="t" id="t60" style="left:322.23px;top:239.00px;font-size:15.6px;line-height:15.6px;color:#333333;">D</span>
<span class="t" id="t61" style="left:399.50px;top:239.00px;font-size:15.6px;line-height:15.6px;color:#333333;">E</span>
<span class="t" id="t62" style="left:476.88px;top:239.00px;font-size:15.6px;line-height:15.6px;color:#333333;">F</span>
<span class="t" id="t63" style="left:553.02px;top:239.00px;font-size:15.6px;line-height:15.6px;color:#333333;">G</span>
<span class="t" id="t64" style="left:629.98px;top:239.00px;font-size:15.6px;line-height:15.6px;color:#333333;">H</span>
<svg style="position:absolute;left:19px;top:238px" width="16" height="16" viewBox="0 0 16 16"><path d="M14.8 0.8 V14.6 H0.6 Z" fill="#b8b8b8"/></svg>
<div style="position:absolute;left:4.00px;top:256.80px;width:32.10px;height:418.20px;background:#e6e6e6;"></div>
<div style="position:absolute;left:36.10px;top:256.20px;width:1.00px;height:418.20px;background:#b4b4b4;"></div>
<div style="position:absolute;left:4.00px;top:277.80px;width:32.60px;height:1.00px;background:#c3c3c3;"></div>
<div style="position:absolute;left:4.00px;top:300.00px;width:32.60px;height:1.00px;background:#c3c3c3;"></div>
<div style="position:absolute;left:4.00px;top:322.60px;width:32.60px;height:1.00px;background:#c3c3c3;"></div>
<div style="position:absolute;left:4.00px;top:344.70px;width:32.60px;height:1.00px;background:#c3c3c3;"></div>
<div style="position:absolute;left:4.00px;top:367.90px;width:32.60px;height:1.00px;background:#c3c3c3;"></div>
<div style="position:absolute;left:4.00px;top:390.50px;width:32.60px;height:1.00px;background:#c3c3c3;"></div>
<div style="position:absolute;left:4.00px;top:412.90px;width:32.60px;height:1.00px;background:#c3c3c3;"></div>
<div style="position:absolute;left:4.00px;top:435.70px;width:32.60px;height:1.00px;background:#c3c3c3;"></div>
<div style="position:absolute;left:4.00px;top:458.10px;width:32.60px;height:1.00px;background:#c3c3c3;"></div>
<div style="position:absolute;left:4.00px;top:480.70px;width:32.60px;height:1.00px;background:#c3c3c3;"></div>
<div style="position:absolute;left:4.00px;top:503.00px;width:32.60px;height:1.00px;background:#c3c3c3;"></div>
<div style="position:absolute;left:4.00px;top:525.20px;width:32.60px;height:1.00px;background:#c3c3c3;"></div>
<div style="position:absolute;left:4.00px;top:547.70px;width:32.60px;height:1.00px;background:#c3c3c3;"></div>
<div style="position:absolute;left:4.00px;top:570.30px;width:32.60px;height:1.00px;background:#c3c3c3;"></div>
<div style="position:absolute;left:4.00px;top:592.60px;width:32.60px;height:1.00px;background:#c3c3c3;"></div>
<div style="position:absolute;left:4.00px;top:615.10px;width:32.60px;height:1.00px;background:#c3c3c3;"></div>
<div style="position:absolute;left:4.00px;top:637.00px;width:32.60px;height:1.00px;background:#c3c3c3;"></div>
<div style="position:absolute;left:4.00px;top:659.60px;width:32.60px;height:1.00px;background:#c3c3c3;"></div>
<div style="position:absolute;left:4.00px;top:682.00px;width:32.60px;height:1.00px;background:#c3c3c3;"></div>
<span class="t" id="t65" style="left:16.55px;top:262.00px;font-size:14.7px;line-height:14.7px;color:#2b2b2b;">1</span>
<span class="t" id="t66" style="left:16.68px;top:284.00px;font-size:14.7px;line-height:14.7px;color:#2b2b2b;">2</span>
<span class="t" id="t67" style="left:16.80px;top:307.00px;font-size:14.7px;line-height:14.7px;color:#2b2b2b;">3</span>
<span class="t" id="t68" style="left:16.80px;top:329.00px;font-size:14.7px;line-height:14.7px;color:#2b2b2b;">4</span>
<span class="t" id="t69" style="left:16.68px;top:352.00px;font-size:14.7px;line-height:14.7px;color:#2b2b2b;">5</span>
<span class="t" id="t70" style="left:16.68px;top:375.00px;font-size:14.7px;line-height:14.7px;color:#2b2b2b;">6</span>
<span class="t" id="t71" style="left:16.68px;top:397.00px;font-size:14.7px;line-height:14.7px;color:#2b2b2b;">7</span>
<span class="t" id="t72" style="left:16.68px;top:420.00px;font-size:14.7px;line-height:14.7px;color:#2b2b2b;">8</span>
<span class="t" id="t73" style="left:16.68px;top:442.00px;font-size:14.7px;line-height:14.7px;color:#2b2b2b;">9</span>
<span class="t" id="t74" style="left:12.43px;top:465.00px;font-size:14.7px;line-height:14.7px;color:#2b2b2b;">10</span>
<span class="t" id="t75" style="left:13.05px;top:487.00px;font-size:14.7px;line-height:14.7px;color:#2b2b2b;">11</span>
<span class="t" id="t76" style="left:12.55px;top:509.00px;font-size:14.7px;line-height:14.7px;color:#2b2b2b;">12</span>
<span class="t" id="t77" style="left:12.43px;top:532.00px;font-size:14.7px;line-height:14.7px;color:#2b2b2b;">13</span>
<span class="t" id="t78" style="left:12.30px;top:554.00px;font-size:14.7px;line-height:14.7px;color:#2b2b2b;">14</span>
<span class="t" id="t79" style="left:12.43px;top:577.00px;font-size:14.7px;line-height:14.7px;color:#2b2b2b;">15</span>
<span class="t" id="t80" style="left:12.43px;top:599.00px;font-size:14.7px;line-height:14.7px;color:#2b2b2b;">16</span>
<span class="t" id="t81" style="left:12.55px;top:621.00px;font-size:14.7px;line-height:14.7px;color:#2b2b2b;">17</span>
<span class="t" id="t82" style="left:12.43px;top:644.00px;font-size:14.7px;line-height:14.7px;color:#2b2b2b;">18</span>
<span class="t" id="t83" style="left:12.43px;top:666.00px;font-size:14.7px;line-height:14.7px;color:#2b2b2b;">19</span>
<div style="position:absolute;left:627.30px;top:256.80px;width:33.40px;height:32.20px;background:#ffffff;box-sizing:border-box;border:1px solid #8f8f8f;"></div>
<div style="position:absolute;left:627.30px;top:300.80px;width:33.40px;height:31.80px;background:#ffffff;box-sizing:border-box;border:1px solid #8f8f8f;"></div>
<div style="position:absolute;left:627.30px;top:344.40px;width:33.40px;height:33.20px;background:#ffffff;box-sizing:border-box;border:1px solid #8f8f8f;"></div>
<svg style="position:absolute;left:636px;top:265px" width="16" height="16" viewBox="0 0 16 16"><path d="M6.2 1 h3.6 v5.2 h5.2 v3.6 h-5.2 v5.2 h-3.6 v-5.2 h-5.2 v-3.6 h5.2 z" fill="#5fa58a"/></svg>
<svg style="position:absolute;left:633px;top:306px" width="22" height="22" viewBox="0 0 22 22"><path d="M19.2 2.2 C20.5 3 20 5.5 18 7.5 L13.5 11 L11.8 9 L15.5 4.5 C17 2.6 18.2 1.8 19.2 2.2 Z" fill="#7a7a7a"/><path d="M11 9.8 L13 12 C12 16.5 7 17.5 2 17.3 C5 16 6 14.5 6.8 12.5 C7.6 10.3 9.5 9.4 11 9.8 Z" fill="#4a86c5"/><path d="M8.3 12.6 C9.3 11.6 10.6 11.8 11.5 12.8" stroke="#fff" stroke-width="0.9" fill="none"/></svg>
<svg style="position:absolute;left:633px;top:350px" width="22" height="22" viewBox="0 0 22 22"><path d="M2.3 3.2 H19.7 L12.6 10.8 V18.6 H9.4 V10.8 Z" fill="#8a8a8a" stroke="#6f6f6f" stroke-width="1"/><path d="M10.5 11.5V17.6H11.5V11.5z" fill="#f4f4f4"/></svg>
<div style="position:absolute;left:4.00px;top:674.30px;width:696.00px;height:27.00px;background:#e6e6e6;"></div>
<div style="position:absolute;left:4.00px;top:673.80px;width:696.00px;height:1.00px;background:#ababab;"></div>
<div style="position:absolute;left:103.80px;top:673.30px;width:75.20px;height:24.20px;background:#ffffff;box-sizing:border-box;border-left:1px solid #b9b9b9;border-right:1px solid #b9b9b9;"></div>
<div style="position:absolute;left:103.80px;top:695.80px;width:75.20px;height:1.70px;background:#217346;"></div>
<span class="t" id="t84" style="left:115.10px;top:678.00px;font-size:15.8px;line-height:15.8px;color:#217346;font-weight:700;">Sheet1</span>
<svg style="position:absolute;left:31px;top:682px" width="8" height="10" viewBox="0 0 8 10"><path d="M6.5 1 V9 L1.2 5 Z" fill="#c6c6c6"/></svg>
<svg style="position:absolute;left:58px;top:682px" width="8" height="10" viewBox="0 0 8 10"><path d="M1.5 1 V9 L6.8 5 Z" fill="#c6c6c6"/></svg>
<svg style="position:absolute;left:210px;top:677px" width="21" height="21" viewBox="0 0 21 21"><circle cx="10.4" cy="10.5" r="9" fill="none" stroke="#8c8c8c" stroke-width="1.2"/><path d="M10.4 5.5 V15.5 M5.4 10.5 H15.4" stroke="#7a7a7a" stroke-width="1.4"/></svg>
<div style="position:absolute;left:474.80px;top:682.30px;width:2.60px;height:2.40px;background:#b3b3b3;"></div>
<div style="position:absolute;left:474.80px;top:686.40px;width:2.60px;height:2.40px;background:#b3b3b3;"></div>
<div style="position:absolute;left:474.80px;top:690.50px;width:2.60px;height:2.40px;background:#b3b3b3;"></div>
<div style="position:absolute;left:492.90px;top:678.40px;width:208.00px;height:17.60px;background:#ffffff;box-sizing:border-box;border:1px solid #9e9e9e;"></div>
<div style="position:absolute;left:509.60px;top:678.40px;width:1.20px;height:17.60px;background:#9e9e9e;"></div>
<svg style="position:absolute;left:497px;top:682px" width="8" height="10" viewBox="0 0 8 10"><path d="M6.2 0.8 V9.2 L1.2 5 Z" fill="#555"/></svg>
<div style="position:absolute;left:4.00px;top:701.00px;width:696.00px;height:25.00px;background:#f3f3f3;"></div>
<div style="position:absolute;left:4.00px;top:701.00px;width:696.00px;height:1.00px;background:#d4d4d4;"></div>
<span class="t" id="t85" style="left:12.67px;top:708.00px;font-size:13px;line-height:13px;color:#444444;transform:scaleX(0.9315);">Ready</span>
<svg style="position:absolute;left:72px;top:706px" width="17" height="16" viewBox="0 0 17 16"><rect x="2.5" y="2" width="13.5" height="12.6" fill="#fff" stroke="#666" stroke-width="1"/><rect x="2" y="1.5" width="14.5" height="4.3" fill="#666"/><circle cx="3.6" cy="3.6" r="2.9" fill="#555"/><path d="M4.8 8.2h2.2M8.3 8.2h2.2M11.8 8.2h2.2M4.8 10.4h2.2M8.3 10.4h2.2M11.8 10.4h2.2M4.8 12.6h2.2M8.3 12.6h2.2M11.8 12.6h2.2" stroke="#777" stroke-width="1.1"/></svg>
<span class="t" id="t86" style="left:135.70px;top:708.00px;font-size:13px;line-height:13px;color:#444444;transform:scaleX(0.9400);">Average: 63.88888889</span>
<span class="t" id="t87" style="left:276.77px;top:708.00px;font-size:13px;line-height:13px;color:#444444;transform:scaleX(0.9673);">Count: 20</span>
<span class="t" id="t88" style="left:348.90px;top:708.00px;font-size:13px;line-height:13px;color:#444444;transform:scaleX(0.9364);">Sum: 575</span>
<div style="position:absolute;left:422.90px;top:701.00px;width:46.40px;height:25.00px;background:#c8c8c8;"></div>
<svg style="position:absolute;left:438px;top:705.5px" width="18" height="16" viewBox="0 0 18 16"><rect x="1.5" y="1.5" width="15" height="13.4" fill="#d9d9d9" stroke="#7a7a7a" stroke-width="1.1"/><path d="M1.5 6h15M1.5 10.4h15M6.5 1.5v13.4M11.5 1.5v13.4" stroke="#7a7a7a" stroke-width="1.1"/></svg>
<svg style="position:absolute;left:485.5px;top:705.5px" width="18" height="16" viewBox="0 0 18 16"><rect x="1.5" y="1.6" width="15" height="12.8" fill="#fafafa" stroke="#7a7a7a" stroke-width="1.1"/><path d="M5 3.8v8.6M13 3.8v8.6" stroke="#9a9a9a" stroke-width="0.9"/><path d="M6.6 5.4h4.8M6.6 7.2h4.8M6.6 9h4.8M6.6 10.8h4.8" stroke="#777" stroke-width="0.9"/></svg>
<svg style="position:absolute;left:533px;top:705.5px" width="19" height="16" viewBox="0 0 19 16"><rect x="1.7" y="1.7" width="15.6" height="13" fill="#fafafa" stroke="#7a7a7a" stroke-width="1.1"/><path d="M6.4 1.7v6.4M1.7 8.1h9.4v-6.4" stroke="#7a7a7a" stroke-width="1" fill="none"/></svg>
<div style="position:absolute;left:573.20px;top:713.00px;width:9.80px;height:1.30px;background:#555;"></div>
<div style="position:absolute;left:589.30px;top:713.10px;width:112.00px;height:1.10px;background:#666;"></div>
<div style="position:absolute;left:645.70px;top:707.00px;width:6.80px;height:13.80px;background:#666;"></div>
<div style="position:absolute;left:3.60px;top:76.30px;width:1.30px;height:652.00px;background:#3c8560;"></div>
<div style="position:absolute;left:4.90px;top:76.30px;width:1.00px;height:156.00px;background:#fbfffc;"></div>
<div style="position:absolute;left:4.90px;top:76.10px;width:432.00px;height:1.00px;background:#fbfffc;"></div>
<div style="position:absolute;left:527.00px;top:76.10px;width:173.00px;height:1.00px;background:#fbfffc;"></div>
<div style="position:absolute;left:0.00px;top:0.00px;width:3.80px;height:728.00px;background:linear-gradient(90deg,#bcc6d6,#a9abbf);"></div>
<div style="position:absolute;left:3.60px;top:725.60px;width:697.00px;height:2.40px;background:#3f8862;"></div>
</div>
</body>
</html>
